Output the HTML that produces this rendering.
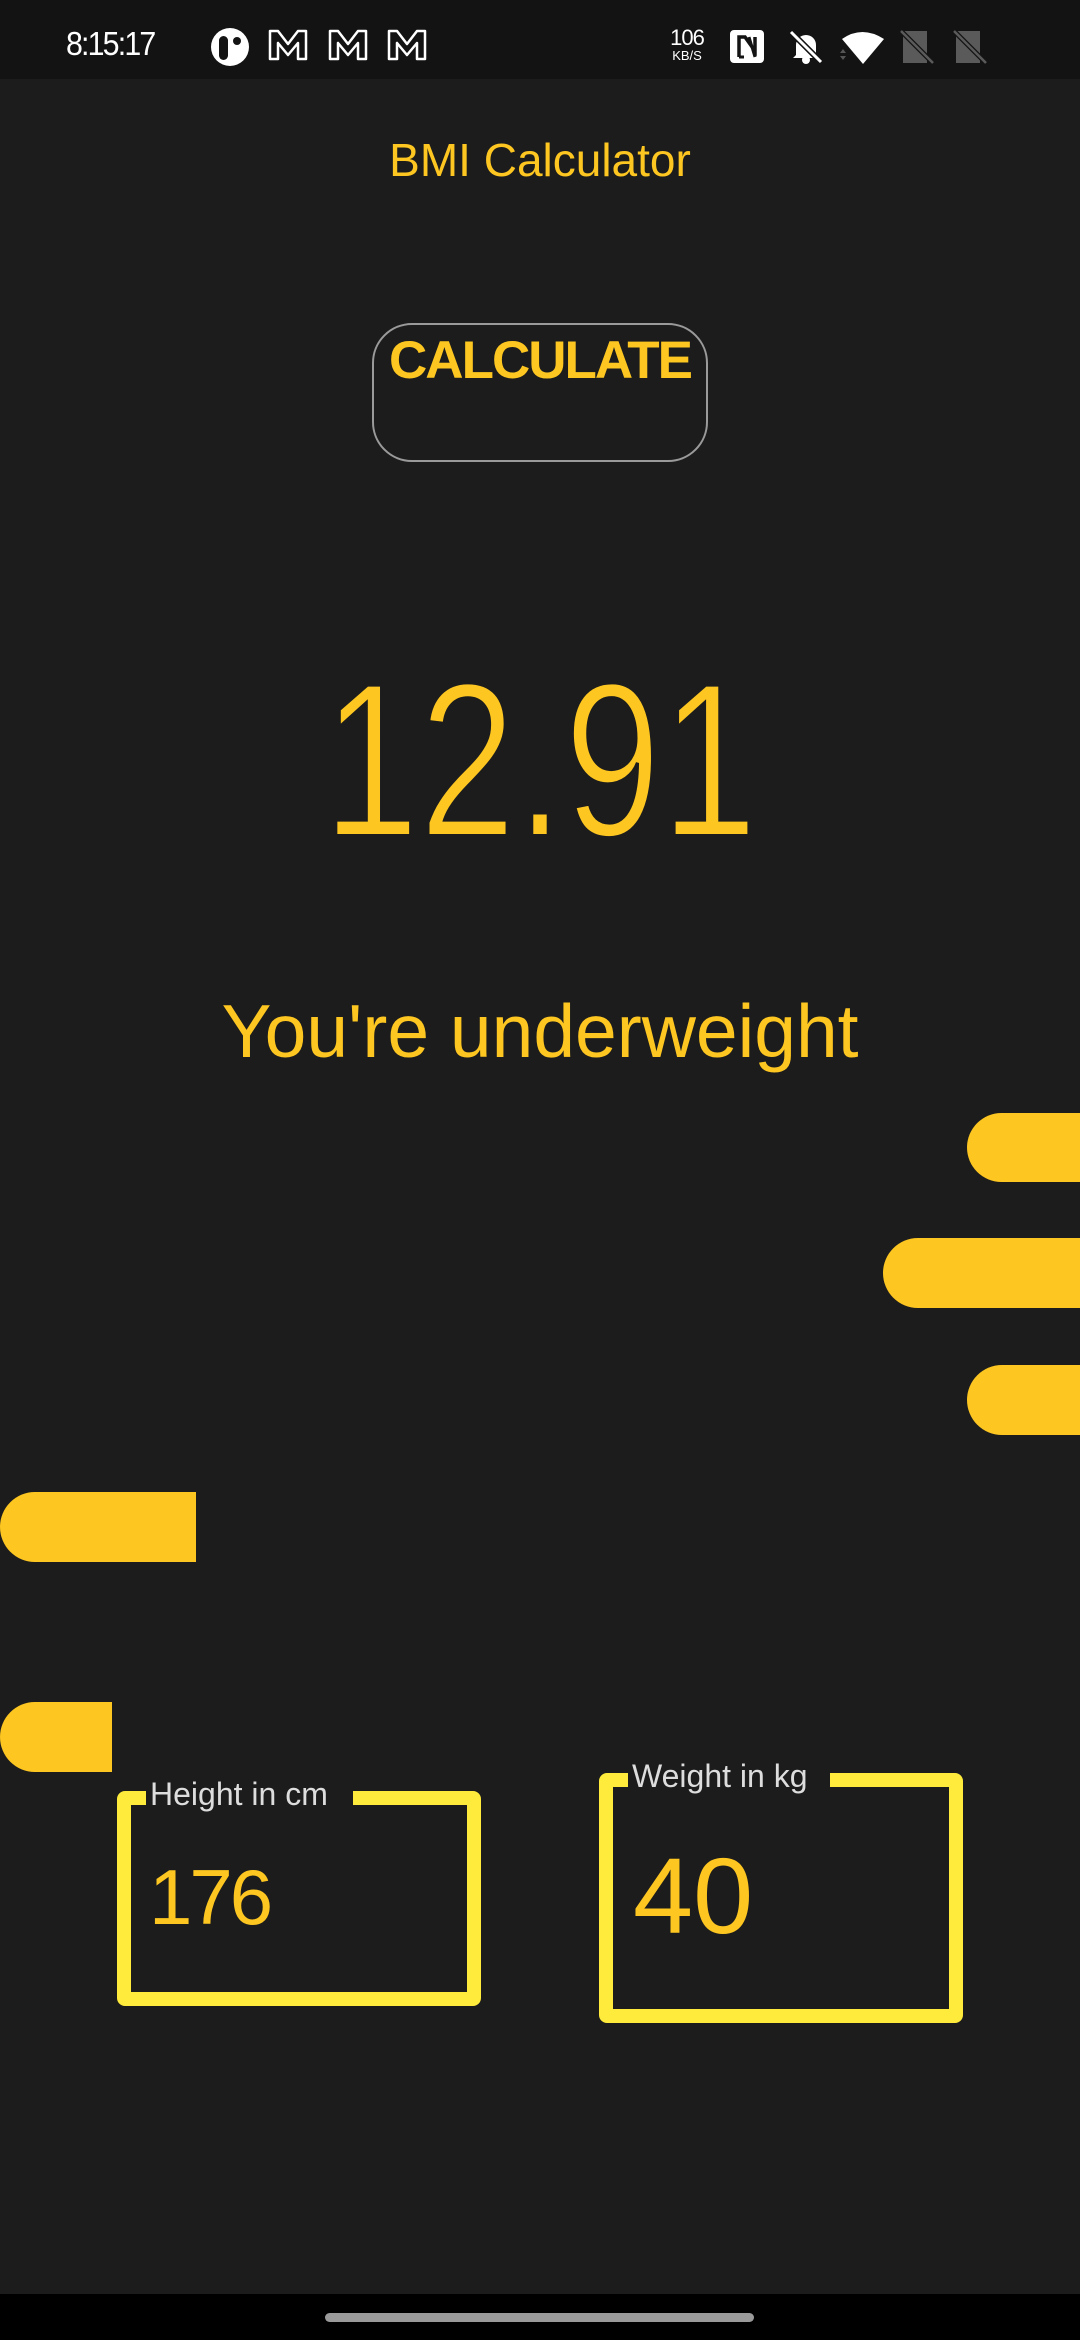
<!DOCTYPE html>
<html><head><meta charset="utf-8"><style>
*{margin:0;padding:0;box-sizing:border-box}
html,body{width:1080px;height:2340px;background:#1c1c1c;overflow:hidden;position:relative;font-family:"Liberation Sans",sans-serif}
.abs{position:absolute}
.sb{left:0;top:0;width:1080px;height:79px;background:#131313}
.y{color:#fdc621}
.pill{position:absolute;background:#fdc621}
.box{position:absolute;border:14px solid #ffeb3b;border-radius:8px}
.lbl{position:absolute;background:#1c1c1c;color:#ddd;font-size:32px;line-height:36px;padding:0 4px}
</style></head><body>
<div class="abs sb"></div>
<div class="abs" style="left:66px;top:24px;color:#fff;font-size:33px;line-height:40px;letter-spacing:-2px;transform:scaleX(0.92);transform-origin:left">8:15:17</div>
<svg class="abs" style="left:210px;top:27px" width="40" height="40" viewBox="0 0 40 40"><circle cx="20" cy="20" r="19" fill="#fff"/><rect x="9" y="9" width="9" height="24" rx="4.5" fill="#131313"/><circle cx="27" cy="14" r="4" fill="#131313"/></svg>
<svg class="abs" style="left:268px;top:29px" width="160" height="32" viewBox="0 0 160 32">
<g fill="none" stroke="#fff" stroke-width="2.5" stroke-linejoin="round">
<path d="M2 30V2h8l10 13 10-13h8v28h-8V14l-10 12-10-12v16z"/>
<path d="M62 30V2h8l10 13 10-13h8v28h-8V14l-10 12-10-12v16z"/>
<path d="M121 30V2h8l10 13 10-13h8v28h-8V14l-10 12-10-12v16z"/>
</g></svg>
<div class="abs" style="left:664px;top:28px;color:#fff;font-size:22px;line-height:20px;width:46px;text-align:center;letter-spacing:-1px">106</div>
<div class="abs" style="left:664px;top:49px;color:#fff;font-size:13px;line-height:14px;width:46px;text-align:center">KB/S</div>
<svg class="abs" style="left:729px;top:29px" width="36" height="35" viewBox="0 0 36 35"><rect x="1" y="1" width="34" height="33" rx="4" fill="#fff"/><path d="M10 28V8h6l10 14V8" fill="none" stroke="#131313" stroke-width="3.5"/><path d="M10 28h5M20 8l6 20" fill="none" stroke="#131313" stroke-width="3"/></svg>
<svg class="abs" style="left:788px;top:29px" width="36" height="36" viewBox="0 0 36 36"><path d="M8 26V16a10 10 0 0 1 20 0v10l3 3H5z" fill="#fff"/><circle cx="18" cy="31" r="4" fill="#fff"/><path d="M3 3l30 30" stroke="#131313" stroke-width="6"/><path d="M3 3l30 30" stroke="#fff" stroke-width="3"/></svg>
<svg class="abs" style="left:840px;top:29px" width="46" height="36" viewBox="0 0 46 36"><path d="M2 10Q22-4 44 10L23 35z" fill="#fff"/><path d="M0 24l3-4 3 4zM0 27l3 4 3-4z" fill="#555"/></svg>
<svg class="abs" style="left:900px;top:29px" width="90" height="36" viewBox="0 0 90 36"><path d="M3 2h24v32H3z" fill="#5a5a5a"/><path d="M56 2h24v32H56z" fill="#5a5a5a"/><path d="M1 2l32 32M54 2l32 32" stroke="#131313" stroke-width="5"/><path d="M1 2l32 32M54 2l32 32" stroke="#5a5a5a" stroke-width="2.5"/></svg>

<div class="abs y" style="left:0;width:1080px;top:132px;text-align:center;font-size:46px;line-height:56px">BMI Calculator</div>

<div class="abs" style="left:372px;top:323px;width:336px;height:139px;border:2.5px solid #9a9a9a;border-radius:40px"></div>
<div class="abs" style="left:372px;top:330px;width:336px;text-align:center;font-size:53px;font-weight:bold;line-height:62px;letter-spacing:-2px;color:#fdc621">CALCULATE</div>

<div class="abs y" style="left:0;width:1080px;top:635px;text-align:center;font-size:220px;line-height:250px;transform:scaleX(0.79);-webkit-text-stroke:4px #1c1c1c">12.91</div>
<div class="abs y" style="left:0;width:1080px;top:988px;text-align:center;font-size:75px;line-height:86px">You're underweight</div>

<div class="pill" style="left:967px;top:1113px;width:113px;height:69px;border-radius:35px 0 0 35px"></div>
<div class="pill" style="left:883px;top:1238px;width:197px;height:70px;border-radius:35px 0 0 35px"></div>
<div class="pill" style="left:967px;top:1365px;width:113px;height:70px;border-radius:35px 0 0 35px"></div>
<div class="pill" style="left:0;top:1492px;width:196px;height:70px;border-radius:35px 0 0 35px"></div>
<div class="pill" style="left:0;top:1702px;width:112px;height:70px;border-radius:35px 0 0 35px"></div>

<div class="box" style="left:117px;top:1791px;width:364px;height:215px"></div>
<div class="lbl" style="left:146px;top:1776px;width:207px">Height in cm</div>
<div class="abs y" style="left:149px;top:1852px;font-size:78px;line-height:90px;letter-spacing:-3px">176</div>

<div class="box" style="left:599px;top:1773px;width:364px;height:250px"></div>
<div class="lbl" style="left:628px;top:1758px;width:202px">Weight in kg</div>
<div class="abs y" style="left:633px;top:1836px;font-size:108px;line-height:120px">40</div>

<div class="abs" style="left:0;top:2294px;width:1080px;height:46px;background:#000"></div>
<div class="abs" style="left:325px;top:2313px;width:429px;height:9px;border-radius:5px;background:#9a9a9a"></div>
</body></html>
